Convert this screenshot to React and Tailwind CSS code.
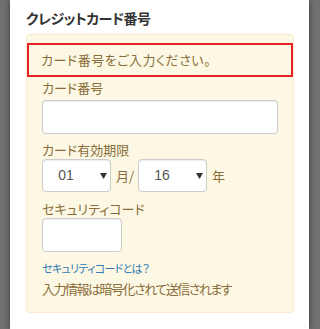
import React from 'react';

const jp = "font-['Noto_Sans_CJK_JP','Noto_Sans',sans-serif] [font-feature-settings:'palt']";

function FakeSelect({ value }) {
  return (
    <div className="relative flex h-[33px] w-[69px] items-center rounded-[4px] border border-[#cccccc] bg-white shadow-[inset_0_1px_1px_rgba(0,0,0,0.075)]">
      <span className="w-[46px] text-center font-['Liberation_Sans',Arial,sans-serif] text-[14px] text-[#555555]">
        {value}
      </span>
      <svg className="absolute left-[57px] top-[13px]" width="7" height="7" viewBox="0 0 7 7">
        <path d="M0 0 L7 0 L3.5 6 Z" fill="#333333" />
      </svg>
    </div>
  );
}

export default function App() {
  return (
    <div className={`flex h-[329px] w-[320px] bg-[#717171] ${jp}`}>
      <div className="ml-[10px] h-full w-[299px] bg-white shadow-[0_0_6px_rgba(0,0,0,0.55)]">
        <h2 className="mt-[8px] ml-[16px] h-[20px] text-[14px] font-bold leading-[20px] tracking-[-0.5px] text-[#333333]">
          クレジットカード番号
        </h2>
        <div className="mt-[6px] ml-[16px] w-[268px] rounded-[4px] border border-[#faebcc] bg-[#fcf8e3] pt-[8px] pb-[13px] text-[#8a6d3b]">
          <div className="flex h-[34px] items-center border-2 border-[#e8212e] px-[12px] text-[13px] tracking-[0.5px]">
            カード番号をご入力ください。
          </div>
          <div className="px-[15px]">
            <div className="mt-[1px] h-[22px] text-[13px] leading-[20px]">カード番号</div>
            <div className="h-[34px] w-[236px] rounded-[4px] border border-[#cccccc] bg-white shadow-[inset_0_1px_1px_rgba(0,0,0,0.075)]" />
            <div className="mt-[6px] h-[19px] text-[13px] leading-[20px]">カード有効期限</div>
            <div className="flex items-center">
              <FakeSelect value="01" />
              <span className="ml-[5px] mr-[4px] text-[13px]">月/</span>
              <FakeSelect value="16" />
              <span className="ml-[5px] text-[13px]">年</span>
            </div>
            <div className="mt-[7px] h-[19px] text-[13px] leading-[19px]">セキュリティコード</div>
            <div className="h-[34px] w-[80px] rounded-[4px] border border-[#cccccc] bg-white shadow-[inset_0_1px_1px_rgba(0,0,0,0.075)]" />
            <div className="mt-[8px] h-[16px] text-[11px] leading-[16px] tracking-[-0.7px] text-[#337ab7]">セキュリティコードとは？</div>
            <div className="mt-[3px] h-[20px] text-[13px] leading-[20px] tracking-[-1.5px]">入力情報は暗号化されて送信されます</div>
          </div>
        </div>
      </div>
    </div>
  );
}
